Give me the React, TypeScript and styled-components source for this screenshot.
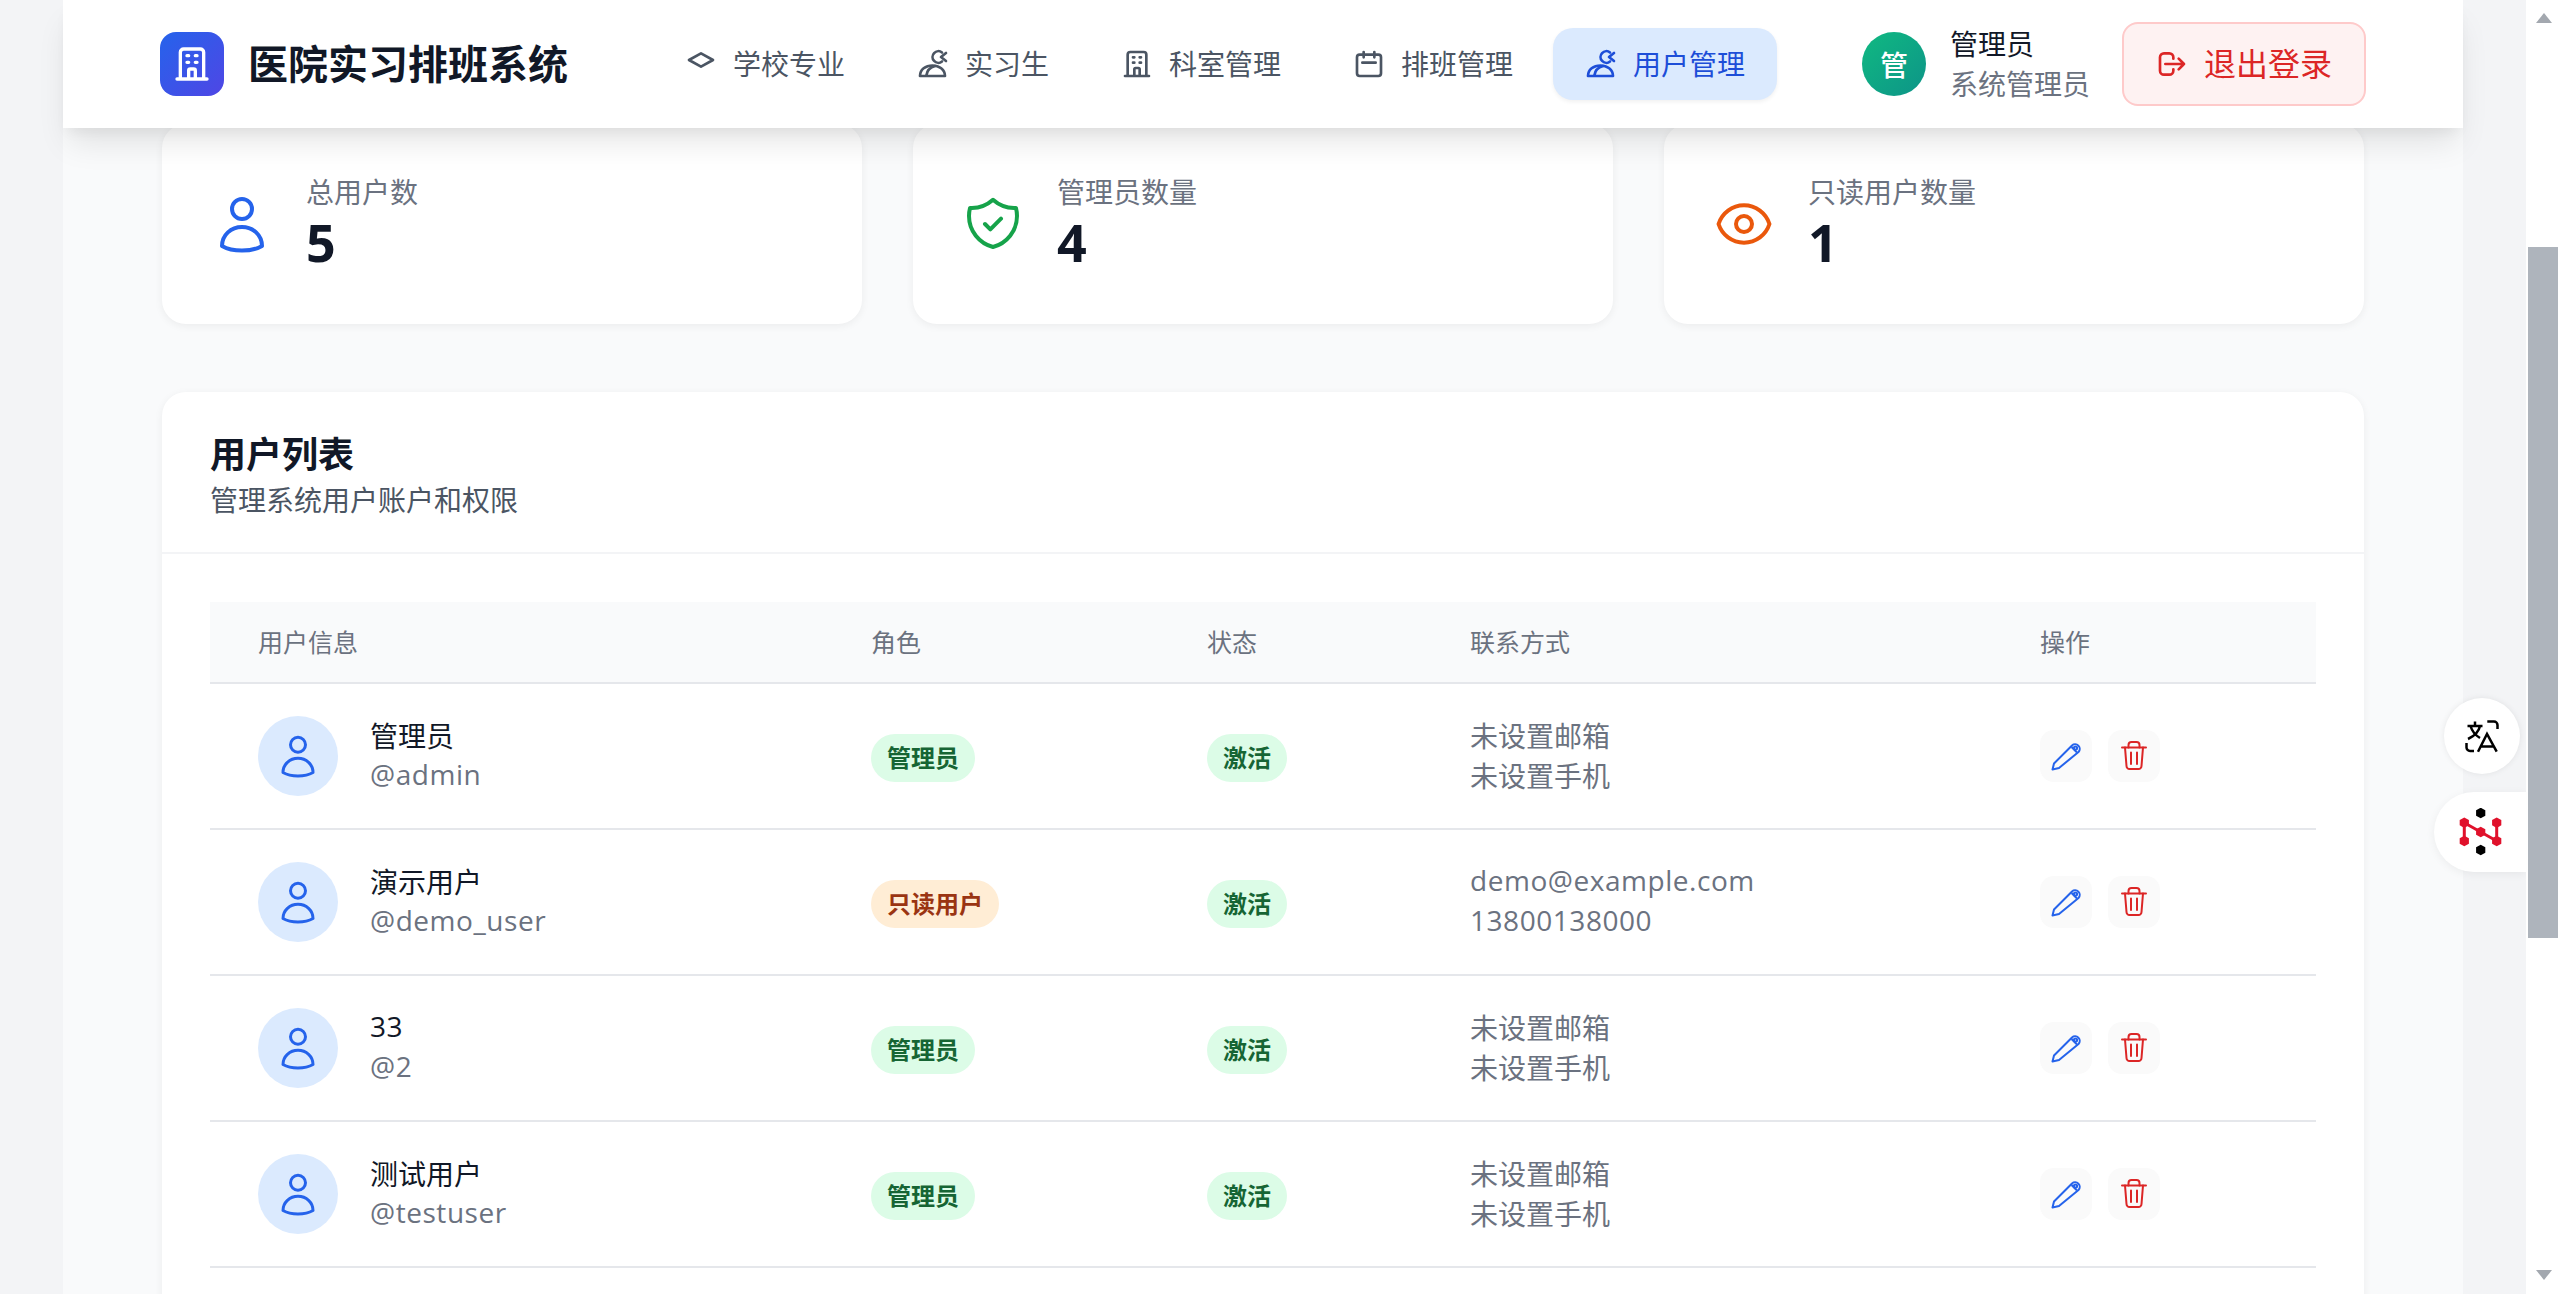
import styled, { createGlobalStyle } from "styled-components";

const GlobalStyle = createGlobalStyle`
  html, body {
    margin: 0;
    height: 100%;
    overflow: hidden;
  }
  body {
    font-family: "Open Sans", "Noto Sans CJK SC", sans-serif;
    color: #111827;
  }
  * {
    box-sizing: border-box;
  }
`;

const Screen = styled.div`
  display: flex;
  width: 2560px;
  height: 1294px;
  overflow: hidden;
`;

const PageArea = styled.div`
  position: relative;
  flex: 1;
  display: flex;
  justify-content: center;
  background: #f3f4f6;
  overflow: hidden;
`;

const Column = styled.div`
  width: 2400px;
  height: 100%;
  background: #f9fafb;
`;

const Header = styled.header`
  position: relative;
  z-index: 10;
  height: 128px;
  display: flex;
  align-items: center;
  justify-content: space-between;
  padding: 0 97px;
  background: #fff;
  box-shadow: 0 20px 30px -6px rgba(0, 0, 0, 0.1), 0 8px 12px -4px rgba(0, 0, 0, 0.05);
`;

const Brand = styled.div`
  display: flex;
  align-items: center;
  gap: 24px;
`;

const BrandMark = styled.div`
  width: 64px;
  height: 64px;
  border-radius: 16px;
  display: flex;
  align-items: center;
  justify-content: center;
  color: #fff;
  background: linear-gradient(135deg, #2563eb, #4f46e5);
`;

const BrandName = styled.h1`
  margin: 0;
  font-size: 40px;
  line-height: 56px;
  font-weight: 700;
  color: #111827;
`;

const Nav = styled.nav`
  display: flex;
  gap: 8px;
`;

const NavItem = styled.a<{ $active?: boolean }>`
  display: flex;
  align-items: center;
  gap: 16px;
  padding: 16px 32px;
  border-radius: 20px;
  font-size: 28px;
  line-height: 40px;
  color: ${(p) => (p.$active ? "#1d4ed8" : "#4b5563")};
  background: ${(p) => (p.$active ? "#dbeafe" : "transparent")};
  box-shadow: ${(p) => (p.$active ? "0 2px 4px rgba(0, 0, 0, 0.06)" : "none")};
`;

const UserBox = styled.div`
  display: flex;
  align-items: center;
`;

const UserAvatar = styled.div`
  width: 64px;
  height: 64px;
  border-radius: 50%;
  display: flex;
  align-items: center;
  justify-content: center;
  color: #fff;
  font-size: 28px;
  font-weight: 500;
  background: linear-gradient(135deg, #10b981, #0d9488);
`;

const UserText = styled.div`
  margin: 0 32px 0 24px;
  font-size: 28px;
  line-height: 40px;
`;

const UserName = styled.div`
  color: #111827;
`;

const UserRole = styled.div`
  color: #6b7280;
`;

const LogoutButton = styled.button`
  display: flex;
  align-items: center;
  gap: 16px;
  padding: 16px 32px;
  border: 2px solid #fecaca;
  border-radius: 16px;
  background: #fef2f2;
  color: #dc2626;
  font-family: inherit;
  font-size: 32px;
  line-height: 48px;
`;

const Main = styled.main`
  margin-top: -4px;
  padding: 0 99px;
`;

const StatGrid = styled.section`
  display: grid;
  grid-template-columns: repeat(3, 1fr);
  gap: 51px;
  margin-bottom: 68px;
`;

const StatCard = styled.div`
  display: flex;
  align-items: center;
  gap: 32px;
  height: 200px;
  padding: 0 48px;
  border-radius: 24px;
  background: #fff;
  box-shadow: 0 2px 8px rgba(0, 0, 0, 0.06);
`;

const StatLabel = styled.div`
  font-size: 28px;
  line-height: 40px;
  color: #6b7280;
`;

const StatValue = styled.div`
  margin: -2px 0 2px;
  font-size: 52px;
  line-height: 64px;
  font-weight: 700;
  color: #111827;
`;

const ListCard = styled.section`
  border-radius: 24px;
  background: #fff;
  box-shadow: 0 2px 8px rgba(0, 0, 0, 0.06);
  padding-bottom: 80px;
`;

const ListHead = styled.div`
  padding: 32px 48px;
  border-bottom: 2px solid #f3f4f6;
`;

const ListTitle = styled.h2`
  margin: 3px 0 -3px;
  font-size: 36px;
  line-height: 56px;
  font-weight: 700;
  color: #111827;
`;

const ListHint = styled.p`
  margin: 0;
  font-size: 28px;
  line-height: 40px;
  color: #4b5563;
`;

const Table = styled.div`
  margin: 48px 48px 0;
`;

const columns = "613px 336px 263px 570px 1fr";

const HeadRow = styled.div`
  display: grid;
  grid-template-columns: ${columns};
  align-items: center;
  height: 82px;
  background: #f9fafb;
  border-bottom: 2px solid #e5e7eb;
`;

const HeadCell = styled.div`
  padding-left: 48px;
  font-size: 25px;
  line-height: 32px;
  color: #6b7280;
`;

const Row = styled.div`
  display: grid;
  grid-template-columns: ${columns};
  align-items: center;
  height: 146px;
  border-bottom: 2px solid #e5e7eb;
`;

const Cell = styled.div`
  padding-left: 48px;
`;

const BadgeCell = styled(Cell)`
  padding-top: 4px;
`;

const PersonCell = styled(Cell)`
  display: flex;
  align-items: center;
  gap: 32px;
`;

const PersonAvatar = styled.div`
  width: 80px;
  height: 80px;
  border-radius: 50%;
  display: flex;
  align-items: center;
  justify-content: center;
  background: #dbeafe;
  color: #2563eb;
`;

const TextStack = styled.div`
  font-size: 28px;
  line-height: 40px;
  color: #6b7280;
`;

// latin strings sit a little higher and wider than the cjk ones in this table
const Line = styled.div<{ $latin?: boolean; $strong?: boolean }>`
  color: ${(p) => (p.$strong ? "#111827" : "inherit")};
  letter-spacing: ${(p) => (p.$latin ? "0.55px" : "0")};
  margin: ${(p) => (p.$latin ? "-2px 0 2px" : "0")};
`;

const tones = {
  green: { bg: "#dcfce7", fg: "#166534" },
  orange: { bg: "#ffedd5", fg: "#9a3412" },
};

const Badge = styled.span<{ $tone: keyof typeof tones }>`
  display: inline-block;
  padding: 8px 16px;
  border-radius: 24px;
  font-size: 24px;
  line-height: 32px;
  font-weight: 700;
  background: ${(p) => tones[p.$tone].bg};
  color: ${(p) => tones[p.$tone].fg};
`;

const Actions = styled(Cell)`
  display: flex;
  gap: 16px;
`;

const ActionButton = styled.button<{ $danger?: boolean }>`
  width: 52px;
  height: 52px;
  padding: 8px;
  border: 0;
  border-radius: 14px;
  background: #fafafa;
  color: ${(p) => (p.$danger ? "#dc2626" : "#2563eb")};
`;

const Floating = styled.div`
  position: absolute;
  display: flex;
  align-items: center;
  justify-content: center;
  background: #fff;
`;

const TranslateFab = styled(Floating)`
  right: 6px;
  top: 698px;
  width: 76px;
  height: 76px;
  border-radius: 50%;
  box-shadow: 0 0 6px rgba(0, 0, 0, 0.08);
`;

const NetworkFab = styled(Floating)`
  right: 0;
  top: 792px;
  width: 92px;
  height: 80px;
  border-radius: 40px 0 0 40px;
  box-shadow: 0 2px 10px rgba(0, 0, 0, 0.06);
`;

const Scrollbar = styled.div`
  width: 34px;
  height: 100%;
  display: flex;
  flex-direction: column;
  align-items: center;
  background: #fff;
  padding: 13px 0 14px 2px;
`;

const ArrowUp = styled.div`
  width: 0;
  height: 0;
  border-left: 8px solid transparent;
  border-right: 8px solid transparent;
  border-bottom: 10px solid #a3a8af;
`;

const ArrowDown = styled.div`
  width: 0;
  height: 0;
  border-left: 8px solid transparent;
  border-right: 8px solid transparent;
  border-top: 10px solid #a3a8af;
`;

const Track = styled.div`
  flex: 1;
  width: 30px;
  margin-right: 2px;
  padding-top: 224px;
`;

const Thumb = styled.div`
  height: 691px;
  background: #aeb4bc;
`;

const paths = {
  cap: "M12 14l9-5-9-5-9 5 9 5z",
  building:
    "M19 21V5a2 2 0 00-2-2H7a2 2 0 00-2 2v16m14 0h2m-2 0h-5m-9 0H3m2 0h5M9 7h1m-1 4h1m4-4h1m-1 4h1m-5 10v-5a1 1 0 011-1h2a1 1 0 011 1v5m-4 0h4",
  calendar:
    "M8 7V3m8 4V3m-9 8h10M5 21h14a2 2 0 002-2V7a2 2 0 00-2-2H5a2 2 0 00-2 2v12a2 2 0 002 2z",
  logout:
    "M17 16l4-4m0 0l-4-4m4 4H7m6 4v1a3 3 0 01-3 3H6a3 3 0 01-3-3V7a3 3 0 013-3h4a3 3 0 013 3v1",
  shield:
    "M9 12l2 2 4-4m5.618-4.016A11.955 11.955 0 0112 2.944a11.955 11.955 0 01-8.618 3.04A12.02 12.02 0 003 9c0 5.591 3.824 10.29 9 11.622 5.176-1.332 9-6.03 9-11.622 0-1.042-.133-2.052-.382-3.016z",
  eye: "M15 12a3 3 0 11-6 0 3 3 0 016 0zM2.458 12C3.732 7.943 7.523 5 12 5c4.478 0 8.268 2.943 9.542 7-1.274 4.057-5.064 7-9.542 7-4.477 0-8.268-2.943-9.542-7z",
};

type IconProps = { name: keyof typeof paths; size: number; color?: string; weight?: number };

function Icon({ name, size, color, weight = 2 }: IconProps) {
  return (
    <svg width={size} height={size} viewBox="0 0 24 24" fill="none" stroke={color ?? "currentColor"} strokeWidth={weight} strokeLinecap="round" strokeLinejoin="round">
      <path d={paths[name]} />
    </svg>
  );
}

// the odd "users" glyph in the nav: a dome with an open ring and a cross
function PeopleIcon() {
  return (
    <svg width="32" height="32" viewBox="0 0 32 32" fill="none" stroke="currentColor" strokeWidth="2.67" strokeLinecap="round" strokeLinejoin="round">
      <path d="M3 28H28C28 21.5 22 17.5 15.5 17.5C8.5 17.5 3 21.5 3 28Z" />
      <path d="M9.5 27C10 22.5 13 19.5 18 18" />
      <path d="M25 4.5A5.8 5.8 0 1 0 25 13.5" />
      <path d="M24 9L29 5M24 9L29 13" />
    </svg>
  );
}

function PersonIcon({ size, color }: { size: number; color?: string }) {
  return (
    <svg width={size} height={size} viewBox="0 0 64 64" fill="none" stroke={color ?? "currentColor"} strokeWidth="4" strokeLinejoin="round">
      <circle cx="32" cy="17" r="10" />
      <path d="M12 54C12 43 21 35 32 35C43 35 52 43 52 54C46 57.5 39 58.6 32 58.6C25 58.6 18 57.5 12 54Z" />
    </svg>
  );
}

function PencilIcon() {
  return (
    <svg width="36" height="36" viewBox="0 0 36 36" fill="none" stroke="currentColor" strokeWidth="2" strokeLinejoin="round">
      <path d="M4.5 31.5L6 25.5L24 7.5A4.6 4.6 0 0 1 30.5 14L11 30Z" />
      <path d="M23.5 9L29 14.5" />
      <circle cx="27.5" cy="10" r="1.6" />
    </svg>
  );
}

function TrashIcon() {
  return (
    <svg width="36" height="36" viewBox="0 0 36 36" fill="none" stroke="currentColor" strokeWidth="2" strokeLinecap="round" strokeLinejoin="round">
      <path d="M6 9.5H30" />
      <path d="M12.5 9.5V7a3 3 0 0 1 3-3h5a3 3 0 0 1 3 3v2.5" />
      <path d="M9 9.5L10.5 28a3 3 0 0 0 3 3h9a3 3 0 0 0 3-3L27 9.5" />
      <path d="M15 14.5V26M21 14.5V26" />
    </svg>
  );
}

function TranslateIcon() {
  return (
    <svg width="34" height="34" viewBox="-1 -1 34 34" fill="none" stroke="#000" strokeWidth="2.5">
      <path d="M1.5 6H16.5M9 1.5V6M4.5 6C6 11 9 15 14 18M14 6C13 11 8.5 16 2 19" />
      <path d="M12 31.7L21 14L30.7 31.7M15 26.5H27.5" />
      <path d="M21.3 1.5H28a3.5 3.5 0 0 1 3.5 3.5V9M0.5 23V27.5a3.5 3.5 0 0 0 3.5 3.5H8" />
    </svg>
  );
}

const hex = (x: number, y: number) => {
  const r = 5.3;
  const w = r * 0.87;
  return `${x},${y - r} ${x + w},${y - r / 2} ${x + w},${y + r / 2} ${x},${y + r} ${x - w},${y + r / 2} ${x - w},${y - r / 2}`;
};

function NetworkIcon() {
  const red: [number, number][] = [[5.3, 14.7], [37.7, 14.7], [21.7, 24], [5.3, 33], [37.7, 33]];
  const black: [number, number][] = [[21.7, 5], [21.7, 42]];
  return (
    <svg width="43" height="48" viewBox="0 0 43 48">
      <path d="M5.3 33V14.7L37.7 33V14.7" fill="none" stroke="#e0112b" strokeWidth="3" />
      {red.map(([x, y]) => (
        <polygon key={`${x}-${y}`} points={hex(x, y)} fill="#e0112b" />
      ))}
      {black.map(([x, y]) => (
        <polygon key={`${x}-${y}`} points={hex(x, y)} fill="#000" />
      ))}
    </svg>
  );
}

const stats = [
  { label: "总用户数", value: 5, icon: <PersonIcon size={64} color="#2563eb" /> },
  { label: "管理员数量", value: 4, icon: <Icon name="shield" size={64} color="#16a34a" weight={1.5} /> },
  { label: "只读用户数量", value: 1, icon: <Icon name="eye" size={64} color="#ea580c" weight={1.5} /> },
];

const users = [
  { name: "管理员", handle: "@admin", role: "管理员", tone: "green", email: "未设置邮箱", phone: "未设置手机" },
  { name: "演示用户", handle: "@demo_user", role: "只读用户", tone: "orange", email: "demo@example.com", phone: "13800138000" },
  { name: "33", handle: "@2", role: "管理员", tone: "green", email: "未设置邮箱", phone: "未设置手机" },
  { name: "测试用户", handle: "@testuser", role: "管理员", tone: "green", email: "未设置邮箱", phone: "未设置手机" },
] as const;

const isLatin = (text: string) => /^[\x20-\x7e]+$/.test(text);

export default function App() {
  return (
    <>
      <GlobalStyle />
      <Screen>
        <PageArea>
          <Column>
            <Header>
              <Brand>
                <BrandMark>
                  <Icon name="building" size={40} />
                </BrandMark>
                <BrandName>医院实习排班系统</BrandName>
              </Brand>
              <Nav>
                <NavItem>
                  <Icon name="cap" size={32} />
                  学校专业
                </NavItem>
                <NavItem>
                  <PeopleIcon />
                  实习生
                </NavItem>
                <NavItem>
                  <Icon name="building" size={32} />
                  科室管理
                </NavItem>
                <NavItem>
                  <Icon name="calendar" size={32} />
                  排班管理
                </NavItem>
                <NavItem $active>
                  <PeopleIcon />
                  用户管理
                </NavItem>
              </Nav>
              <UserBox>
                <UserAvatar>管</UserAvatar>
                <UserText>
                  <UserName>管理员</UserName>
                  <UserRole>系统管理员</UserRole>
                </UserText>
                <LogoutButton>
                  <Icon name="logout" size={32} />
                  退出登录
                </LogoutButton>
              </UserBox>
            </Header>
            <Main>
              <StatGrid>
                {stats.map((s) => (
                  <StatCard key={s.label}>
                    {s.icon}
                    <div>
                      <StatLabel>{s.label}</StatLabel>
                      <StatValue>{s.value}</StatValue>
                    </div>
                  </StatCard>
                ))}
              </StatGrid>
              <ListCard>
                <ListHead>
                  <ListTitle>用户列表</ListTitle>
                  <ListHint>管理系统用户账户和权限</ListHint>
                </ListHead>
                <Table>
                  <HeadRow>
                    <HeadCell>用户信息</HeadCell>
                    <HeadCell>角色</HeadCell>
                    <HeadCell>状态</HeadCell>
                    <HeadCell>联系方式</HeadCell>
                    <HeadCell>操作</HeadCell>
                  </HeadRow>
                  {users.map((u) => (
                    <Row key={u.handle}>
                      <PersonCell>
                        <PersonAvatar>
                          <PersonIcon size={48} />
                        </PersonAvatar>
                        <TextStack>
                          <Line $strong $latin={isLatin(u.name)}>{u.name}</Line>
                          <Line $latin>{u.handle}</Line>
                        </TextStack>
                      </PersonCell>
                      <BadgeCell>
                        <Badge $tone={u.tone}>{u.role}</Badge>
                      </BadgeCell>
                      <BadgeCell>
                        <Badge $tone="green">激活</Badge>
                      </BadgeCell>
                      <Cell>
                        <TextStack>
                          <Line $latin={isLatin(u.email)}>{u.email}</Line>
                          <Line $latin={isLatin(u.phone)}>{u.phone}</Line>
                        </TextStack>
                      </Cell>
                      <Actions>
                        <ActionButton>
                          <PencilIcon />
                        </ActionButton>
                        <ActionButton $danger>
                          <TrashIcon />
                        </ActionButton>
                      </Actions>
                    </Row>
                  ))}
                </Table>
              </ListCard>
            </Main>
          </Column>
          <TranslateFab>
            <TranslateIcon />
          </TranslateFab>
          <NetworkFab>
            <NetworkIcon />
          </NetworkFab>
        </PageArea>
        <Scrollbar>
          <ArrowUp />
          <Track>
            <Thumb />
          </Track>
          <ArrowDown />
        </Scrollbar>
      </Screen>
    </>
  );
}
